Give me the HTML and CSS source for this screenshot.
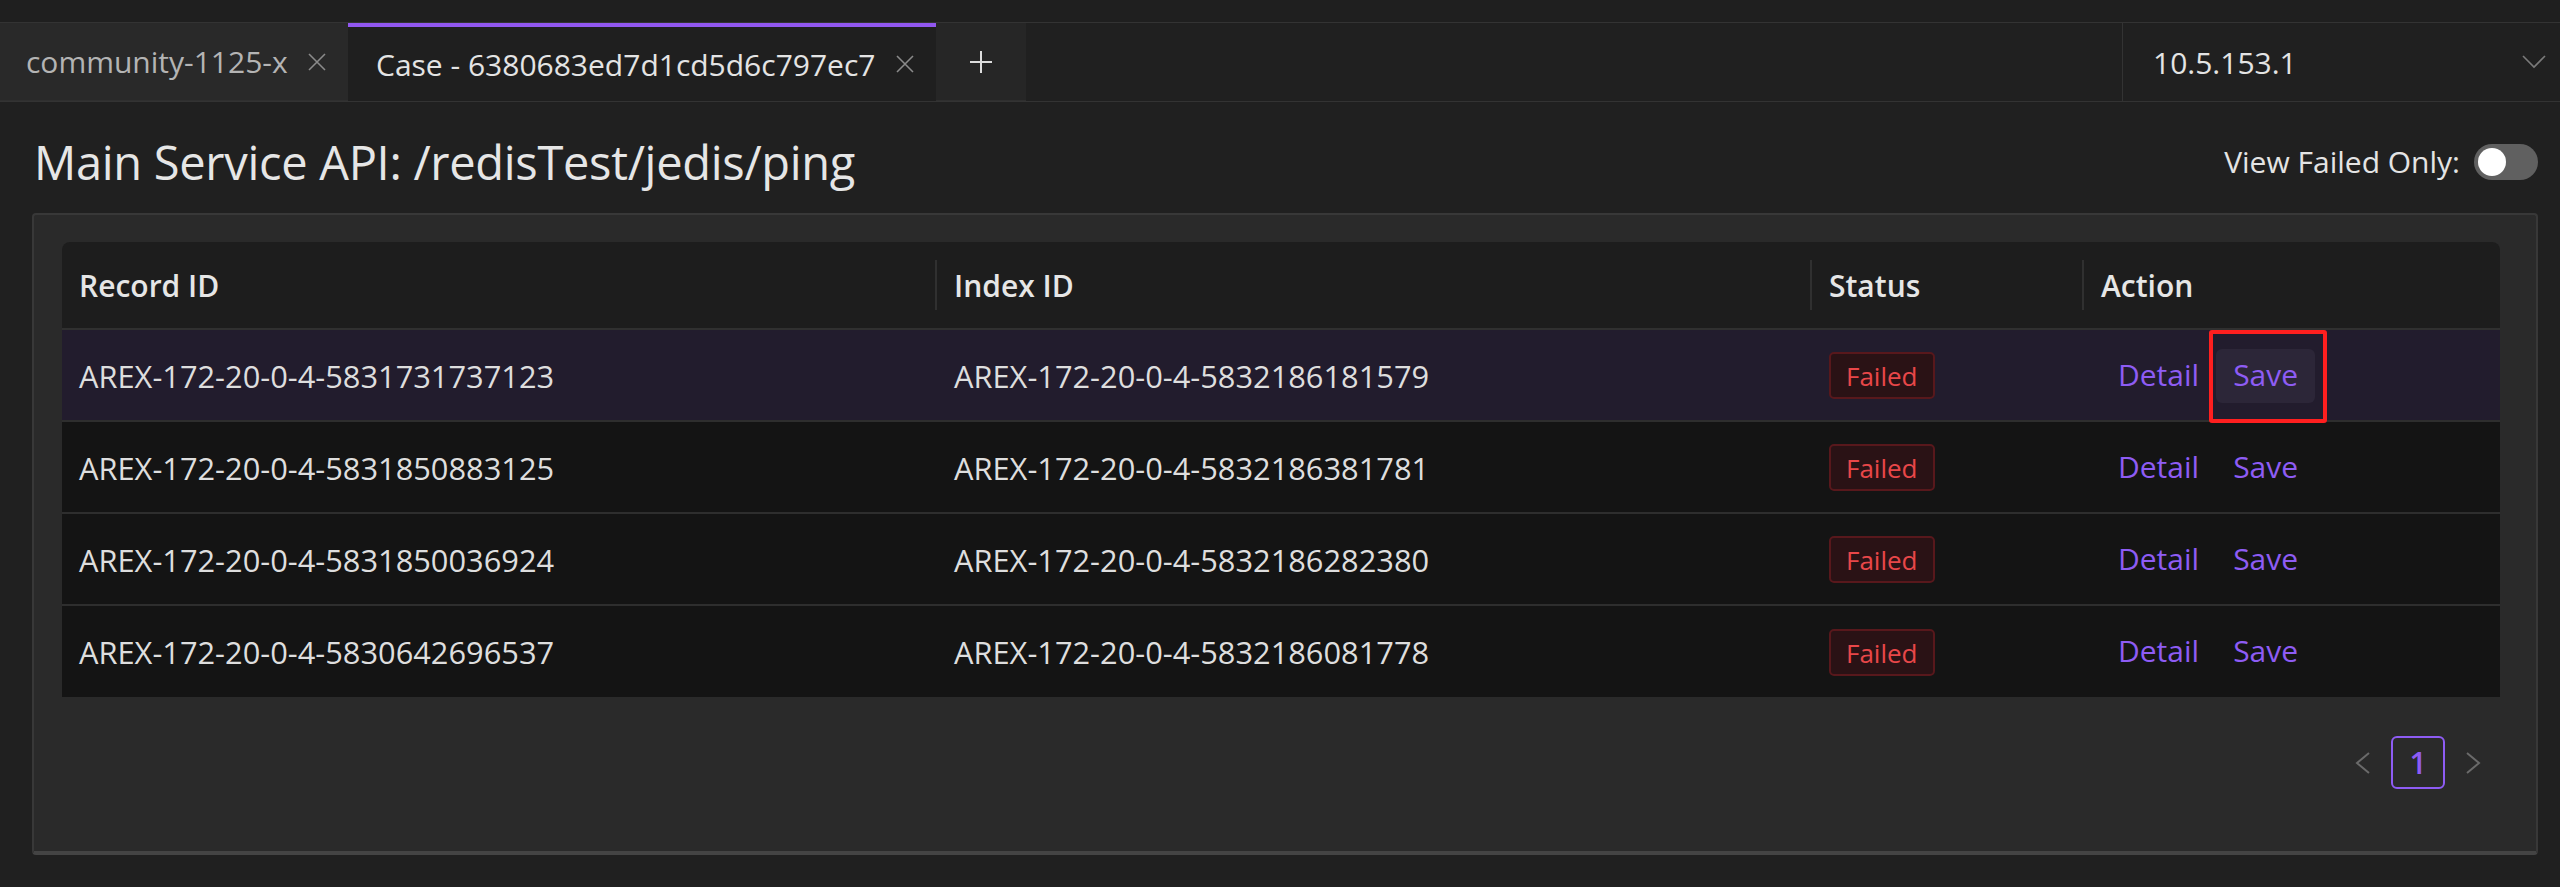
FILE: index.html
```html
<!DOCTYPE html>
<html lang="en">
<head>
<meta charset="utf-8">
<title>Case</title>
<link rel="stylesheet" href="styles.css">
</head>
<body>
<div class="topstrip"></div>
<div class="tabbar">
  <div class="tab tab-w1">
    <span class="tab-label">community-1125-x</span>
    <svg class="tab-close" viewBox="0 0 18 18"><path d="M1 1L17 17M17 1L1 17"/></svg>
  </div>
  <div class="tab tab-active tab-w2">
    <span class="tab-label">Case - 6380683ed7d1cd5d6c797ec7</span>
    <svg class="tab-close" viewBox="0 0 18 18"><path d="M1 1L17 17M17 1L1 17"/></svg>
  </div>
  <div class="tab-add">
    <svg class="plus-icon" viewBox="0 0 24 24"><path d="M12 1V23M1 12H23"/></svg>
  </div>
  <div class="tab-spacer"></div>
  <div class="env-select">
    <span class="env-value">10.5.153.1</span>
    <svg class="env-chevron" viewBox="0 0 24 14"><path d="M1 1L12 12L23 1"/></svg>
  </div>
</div>

<div class="page-head">
  <h1 class="page-title">Main Service API: /redisTest/jedis/ping</h1>
  <div class="filter">
    <span class="filter-label">View Failed Only:</span>
    <span class="switch"><span class="switch-knob"></span></span>
  </div>
</div>

<div class="card">
  <div class="table-wrap">
    <table class="cases">
      <colgroup>
        <col class="c-record"><col class="c-index"><col class="c-status"><col class="c-action">
      </colgroup>
      <thead>
        <tr><th>Record ID</th><th class="sep">Index ID</th><th class="sep">Status</th><th class="sep">Action</th></tr>
      </thead>
      <tbody>
        <tr class="row-active">
          <td>AREX-172-20-0-4-5831731737123</td>
          <td>AREX-172-20-0-4-5832186181579</td>
          <td><span class="tag-failed">Failed</span></td>
          <td><div class="actions"><span class="btn-link">Detail</span><span class="btn-link btn-hover">Save<span class="mark-box"></span></span></div></td>
        </tr>
        <tr>
          <td>AREX-172-20-0-4-5831850883125</td>
          <td>AREX-172-20-0-4-5832186381781</td>
          <td><span class="tag-failed">Failed</span></td>
          <td><div class="actions"><span class="btn-link">Detail</span><span class="btn-link">Save</span></div></td>
        </tr>
        <tr>
          <td>AREX-172-20-0-4-5831850036924</td>
          <td>AREX-172-20-0-4-5832186282380</td>
          <td><span class="tag-failed">Failed</span></td>
          <td><div class="actions"><span class="btn-link">Detail</span><span class="btn-link">Save</span></div></td>
        </tr>
        <tr>
          <td>AREX-172-20-0-4-5830642696537</td>
          <td>AREX-172-20-0-4-5832186081778</td>
          <td><span class="tag-failed">Failed</span></td>
          <td><div class="actions"><span class="btn-link">Detail</span><span class="btn-link">Save</span></div></td>
        </tr>
      </tbody>
    </table>
  </div>
  <div class="pager">
    <svg class="pager-arrow" viewBox="0 0 16 22"><path d="M14 1L2 11L14 21"/></svg>
    <span class="pager-item">1</span>
    <svg class="pager-arrow" viewBox="0 0 16 22"><path d="M2 1L14 11L2 21"/></svg>
  </div>
</div>
</body>
</html>
```

FILE: styles.css
```css
* { box-sizing: border-box; }
html, body { margin: 0; padding: 0; }
body {
  background: #202020;
  color: #dcdcdc;
  font-family: "Open Sans", "Noto Sans", sans-serif;
  font-size: 30px;
  width: 2560px;
  height: 887px;
  overflow: hidden;
}

.topstrip {
  height: 23px;
  background: #1f1f1f;
  border-bottom: 1px solid #333333;
}

.tabbar {
  display: flex;
  height: 79px;
  border-bottom: 1px solid #333333;
}
.tab {
  display: flex;
  align-items: center;
  gap: 19px;
  padding: 0 22px 0 26px;
  background: #292929;
  color: #b4b4b4;
  border-bottom: 1px solid #2f2f2f;
}
.tab-w1 { width: 348px; }
.tab-w2 { width: 588px; }
.tab-label { white-space: nowrap; flex: 1; }
.tab-active {
  background: #1f1f1f;
  color: #e4e4e4;
  border-top: 4px solid #9157f0;
  border-bottom: none;
  padding-left: 28px;
}
.tab-close {
  width: 18px;
  height: 18px;
  flex: none;
  fill: none;
  stroke: #8a8a8a;
  stroke-width: 1.6;
}
.tab-add {
  width: 90px;
  display: flex;
  align-items: center;
  justify-content: center;
  background: #262626;
  border-bottom: 1px solid #2f2f2f;
}
.plus-icon {
  width: 24px;
  height: 24px;
  fill: none;
  stroke: #dddddd;
  stroke-width: 2;
}
.tab-spacer { flex: 1; }
.env-select {
  width: 438px;
  display: flex;
  align-items: center;
  justify-content: space-between;
  padding: 0 14px 0 30px;
  border-left: 1px solid #333333;
  color: #e4e4e4;
}
.env-chevron {
  width: 24px;
  height: 14px;
  fill: none;
  stroke: #7a7a7a;
  stroke-width: 1.6;
}

.page-head {
  height: 111px;
  display: flex;
  align-items: center;
  justify-content: space-between;
  padding: 8px 22px 0 34px;
}
.page-title {
  margin: 0;
  font-size: 47px;
  font-weight: 500;
  color: #e6e6e6;
  letter-spacing: -0.3px;
}
.filter {
  display: flex;
  align-items: center;
  gap: 14px;
  color: #e4e4e4;
}
.switch {
  width: 64px;
  height: 36px;
  border-radius: 18px;
  background: #606060;
  padding: 4px;
  display: flex;
}
.switch-knob {
  width: 28px;
  height: 28px;
  border-radius: 50%;
  background: #ffffff;
}

.card {
  margin: 0 22px 0 32px;
  height: 642px;
  background: #2a2a2a;
  border: 2px solid #383838;
  border-bottom: 4px solid #444444;
  border-radius: 4px;
  padding: 27px 36px 0 28px;
}
.table-wrap {
  border-radius: 8px 8px 0 0;
  overflow: hidden;
}
.cases {
  width: 100%;
  border-collapse: collapse;
  table-layout: fixed;
}
.c-record { width: 873px; }
.c-index { width: 875px; }
.c-status { width: 272px; }
.c-action { width: 418px; }
.cases th {
  position: relative;
  height: 87px;
  background: #1d1d1d;
  text-align: left;
  font-weight: 600;
  color: #e6e6e6;
  padding: 0 19px;
  border-bottom: 2px solid #303030;
}
.cases th:first-child { padding-left: 17px; }
.cases th.sep::before {
  content: "";
  position: absolute;
  left: 0;
  top: 18px;
  width: 2px;
  height: 50px;
  background: #303030;
}
.cases td {
  height: 92px;
  padding: 1px 19px 0;
  font-size: 30.8px;
  background: #141414;
  color: #dedede;
  white-space: nowrap;
  border-bottom: 2px solid #2e2e2e;
}
.cases td:first-child { padding-left: 17px; }
.cases tr:last-child td { border-bottom: none; height: 92px; }
.row-active td { background: #221c2d; }

.tag-failed {
  display: inline-block;
  height: 47px;
  line-height: 44px;
  padding: 0 15px;
  font-size: 26px;
  color: #e84749;
  background: #2a1215;
  border: 2px solid #58181c;
  border-radius: 5px;
}

.actions {
  display: flex;
  align-items: center;
  font-size: 30px;
}
.btn-link {
  position: relative;
  height: 54px;
  line-height: 52px;
  padding: 0 17px;
  color: #8e5cf4;
  border-radius: 6px;
}
.btn-hover { background: #2c2638; }
.mark-box {
  position: absolute;
  left: -7px;
  top: -19px;
  width: 118px;
  height: 93px;
  border: 4px solid #ff1f1f;
  border-radius: 3px;
}

.pager {
  display: flex;
  justify-content: flex-end;
  align-items: center;
  gap: 20px;
  margin-top: 39px;
  padding-right: 19px;
}
.pager-arrow {
  width: 16px;
  height: 22px;
  fill: none;
  stroke: #6a6a6a;
  stroke-width: 2;
}
.pager-item {
  width: 54px;
  height: 53px;
  display: flex;
  align-items: center;
  justify-content: center;
  border: 2px solid #8e5cf4;
  border-radius: 6px;
  color: #8e5cf4;
  font-weight: 600;
}
```
